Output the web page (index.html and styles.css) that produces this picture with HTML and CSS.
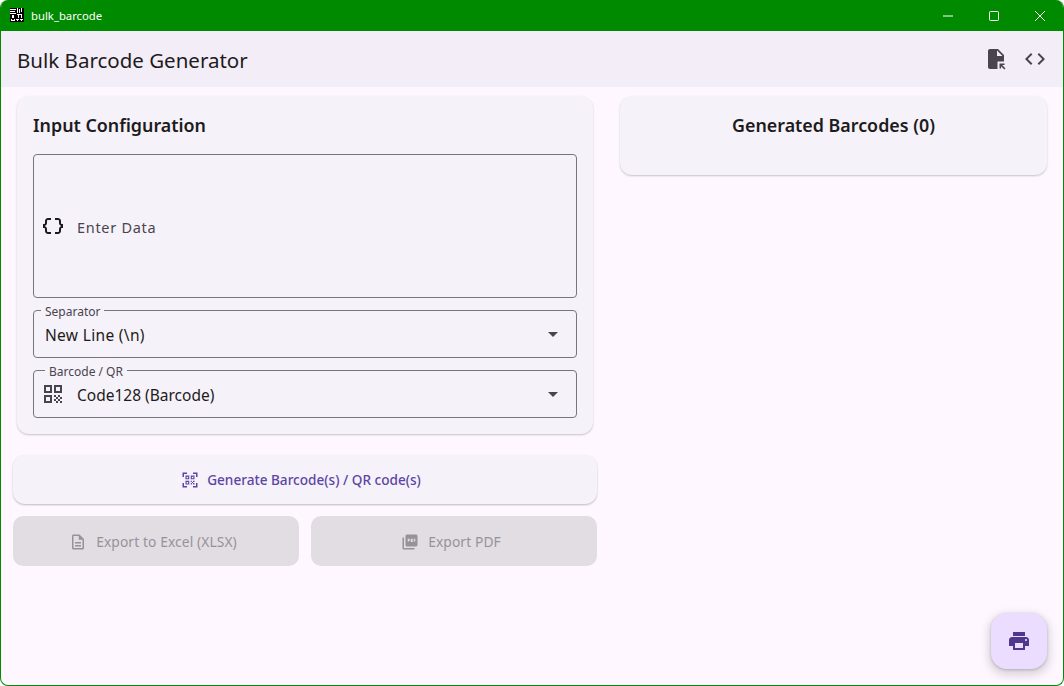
FILE: index.html
```html
<!DOCTYPE html>
<html lang="en">
<head>
<meta charset="utf-8">
<title>bulk_barcode</title>
<link rel="stylesheet" href="styles.css">
</head>
<body>
<div class="window">
  <header class="titlebar">
    <svg class="app-icon" width="14" height="14" viewBox="0 0 14 14"><rect width="14" height="14" fill="#000"/><path d="M0 1h6v1H0zM0 3h5v1H0zM7 0h1v5H7zM9 1h1v4H9zM11 0h1v4h-1zM0 5h6v1H0zM7 6h5v1H7zM8 7h1v3H8zM11 7h1v3h-1zM2 7h2v3H2zM1 11h1v2H1zM4 11h1v2H4zM6 11h3v1H6zM10 11h3v1h-3zM2 12h2v1H2zM7 12h1v1H7zM11 12h1v1h-1z" fill="#fff"/></svg>
    <span class="app-name">bulk_barcode</span>
    <div class="win-controls">
      <svg width="10" height="10" viewBox="0 0 10 10"><path d="M0 5h10" stroke="#fff" fill="none"/></svg>
      <svg width="10" height="10" viewBox="0 0 10 10"><rect x=".5" y=".5" width="9" height="9" rx="1" stroke="#fff" fill="none"/></svg>
      <svg width="10" height="10" viewBox="0 0 10 10"><path d="M0 0l10 10M10 0L0 10" stroke="#fff" fill="none"/></svg>
    </div>
  </header>
  <div class="appbar">
    <h1 class="app-title">Bulk Barcode Generator</h1>
    <div class="actions">
      <svg width="24" height="24" viewBox="0 0 24 24"><path d="M6 2h8l6 6v6.500h-6.500V22H6c-1.100 0-2-.9-2-2V4c0-1.100.9-2 2-2zm7 1.500V9h5.500z" fill="#49454f" fill-rule="evenodd"/><path d="M15.500 16.500h5v1.600h-2.300l3.300 3.300-1.100 1.100-3.300-3.300v2.300h-1.600z" fill="#49454f"/></svg>
      <svg width="24" height="24" viewBox="0 0 24 24"><path d="M9.400 16.600 4.800 12l4.600-4.600L8 6l-6 6 6 6 1.400-1.400zm5.200 0 4.600-4.600-4.600-4.600L16 6l6 6-6 6-1.400-1.400z" fill="#49454f"/></svg>
    </div>
  </div>
  <main class="content">
    <section class="left">
      <div class="card input-card">
        <h2 class="card-title">Input Configuration</h2>
        <div class="field data-field">
          <svg class="field-icon" width="24" height="24" viewBox="0 0 24 24"><path d="M4 7v2c0 .55-.45 1-1 1H2v4h1c.55 0 1 .45 1 1v2c0 1.650 1.350 3 3 3h3v-2H7c-.55 0-1-.45-1-1v-2c0-1.300-.84-2.420-2-2.830v-.34C5.160 11.420 6 10.300 6 9V7c0-.55.45-1 1-1h3V4H7C5.350 4 4 5.350 4 7zm17 3c-.55 0-1-.45-1-1V7c0-1.650-1.350-3-3-3h-3v2h3c.55 0 1 .45 1 1v2c0 1.300.84 2.420 2 2.830v.34c-1.160.41-2 1.520-2 2.830v2c0 .55-.45 1-1 1h-3v2h3c1.650 0 3-1.350 3-3v-2c0-.55.45-1 1-1h1v-4h-1z" fill="#1d1b20"/></svg>
          <span class="placeholder">Enter Data</span>
        </div>
        <div class="field select sep-field">
          <span class="legend sep-legend">Separator</span>
          <span class="value">New Line (\n)</span>
          <span class="caret"></span>
        </div>
        <div class="field select with-icon">
          <span class="legend bar-legend">Barcode / QR</span>
          <svg class="field-icon" width="24" height="24" viewBox="0 0 24 24"><path d="M3 11h8V3H3v8zm2-6h4v4H5V5zM3 21h8v-8H3v8zm2-6h4v4H5v-4zM13 3v8h8V3h-8zm6 6h-4V5h4v4zM19 19h2v2h-2zM13 13h2v2h-2zM15 15h2v2h-2zM13 17h2v2h-2zM15 19h2v2h-2zM17 17h2v2h-2zM17 13h2v2h-2zM19 15h2v2h-2z" fill="#49454f"/></svg>
          <span class="value">Code128 (Barcode)</span>
          <span class="caret"></span>
        </div>
      </div>
      <button class="btn generate" type="button">
        <svg width="18" height="18" viewBox="0 0 24 24"><path d="M2 2h6v2H4v4H2zM16 2h6v6h-2V4h-4zM2 16h2v4h4v2H2zM20 16h2v6h-6v-2h4zM6 6h5v5H6zm1.500 1.500v2h2v-2zM13 6h5v5h-5zm1.500 1.500v2h2v-2zM6 13h5v5H6zm1.500 1.500v2h2v-2zM13 13h1.500v1.500H13zM14.500 14.500H16V16h-1.500zM16 13h2v1.500h-2zM13 16h1.500v2H13zM16 16h2v2h-2z" fill="#5b46a5" fill-rule="evenodd"/></svg>
        <span>Generate Barcode(s) / QR code(s)</span>
      </button>
      <div class="export-row">
        <button class="btn disabled" type="button">
          <svg width="18" height="18" viewBox="0 0 24 24"><path d="M8 16h8v2H8zm0-4h8v2H8zm6-10H6c-1.100 0-2 .9-2 2v16c0 1.100.89 2 1.990 2H18c1.100 0 2-.9 2-2V8l-6-6zm4 18H6V4h7v5h5v11z" fill="#96929a"/></svg>
          <span>Export to Excel (XLSX)</span>
        </button>
        <button class="btn disabled" type="button">
          <svg width="18" height="18" viewBox="0 0 24 24"><path d="M20 2H8c-1.100 0-2 .9-2 2v12c0 1.100.9 2 2 2h12c1.100 0 2-.9 2-2V4c0-1.100-.9-2-2-2zM4 6H2v14c0 1.100.9 2 2 2h14v-2H4V6z" fill="#96929a"/><path d="M9 7.500h2.500v3H10v1.500H9zM13 7.500h2.500v4.500H13zM17 7.500h2.500v1H18v1h1.300v1H18V12h-1z" fill="#e2dde3"/></svg>
          <span>Export PDF</span>
        </button>
      </div>
    </section>
    <section class="right">
      <div class="card result-card">
        <h2 class="card-title">Generated Barcodes (0)</h2>
      </div>
    </section>
  </main>
  <button class="fab" type="button" aria-label="Print">
    <svg width="24" height="24" viewBox="0 0 24 24"><path d="M19 8H5c-1.660 0-3 1.340-3 3v6h4v4h12v-4h4v-6c0-1.660-1.340-3-3-3zm-3 11H8v-5h8v5zm3-7c-.55 0-1-.45-1-1s.45-1 1-1 1 .45 1 1-.45 1-1 1zm-1-9H6v4h12V3z" fill="#4f378b"/></svg>
  </button>
</div>
</body>
</html>
```
FILE: styles.css
```css
* { box-sizing: border-box; }
html, body { margin: 0; height: 100%; background: #fff; }
body { font-family: "Noto Sans", sans-serif; color: #1d1b20; overflow: hidden; }
.window {
  position: relative;
  width: 1064px;
  height: 686px;
  border: 1px solid #008a00;
  border-top: 0;
  border-radius: 8px;
  overflow: hidden;
  background: #fef7ff;
  display: flex;
  flex-direction: column;
}
.titlebar {
  height: 31px;
  flex: none;
  background: #008a00;
  display: flex;
  align-items: center;
  padding-left: 9px;
  color: #fff;
}
.app-icon { flex: none; margin-top: -1px; }
.app-name { margin-left: 7px; font-size: 11.300px; }
.win-controls { margin-left: auto; display: flex; }
.win-controls svg { display: block; margin: 0 18px; }
.appbar {
  height: 56px;
  flex: none;
  background: #f3edf7;
  display: flex;
  align-items: center;
  padding: 0 16px;
}
.app-title { margin: 0; font-size: 20.500px; font-weight: 400; color: #1d1b20; position: relative; top: 1px; }
.actions { margin-left: auto; display: flex; gap: 15px; }
.actions svg { display: block; }
.content {
  flex: 1;
  min-height: 0;
  display: grid;
  grid-template-columns: 608px 1fr;
  padding-top: 9px;
}
.left { padding: 0 0 0 12px; width: 596px; display: flex; flex-direction: column; }
.right { padding: 0 16px 0 11px; }
.card {
  background: #f6f2f9;
  border-radius: 12px;
  box-shadow: 0 1px 2px rgba(0,0,0,.22);
}
.input-card { margin: 0 4px; padding: 16px; height: 338px; display: flex; flex-direction: column; }
.card-title { margin: 0; font-size: 17.850px; line-height: 26px; font-weight: 600; color: #1d1b20; }
.result-card { height: 79px; padding-top: 16px; text-align: center; }
.field {
  position: relative;
  display: flex;
  align-items: center;
  border: 1px solid #79747e;
  border-radius: 4px;
  width: 544px;
}
.data-field { height: 144px; margin-top: 16px; padding-left: 7px; }
.select { height: 48px; margin-top: 12px; padding-left: 11px; }
.with-icon { padding-left: 7px; }
.field-icon { display: block; flex: none; }
.placeholder { margin-left: 12px; font-size: 14.500px; line-height: 22px; padding-top: 2px; color: #49454f; letter-spacing: .7px; }
.value { font-size: 15.500px; line-height: 22px; padding-top: 2px; color: #1d1b20; }
.sep-field .value { letter-spacing: .33px; }
.with-icon .value { margin-left: 12px; }
.legend {
  position: absolute;
  top: -6px;
  padding: 0 4px;
  font-size: 12px;
  line-height: 13px;
  color: #49454f;
  background: #f6f2f9;
}
.sep-legend { left: 7px; }
.bar-legend { left: 11px; }
.caret {
  position: absolute;
  right: 18px;
  top: 21px;
  width: 0;
  height: 0;
  border-left: 5px solid transparent;
  border-right: 5px solid transparent;
  border-top: 5px solid #49454f;
}
.btn {
  border: 0;
  font-family: inherit;
  font-size: 13.600px;
  font-weight: 500;
  display: flex;
  align-items: center;
  justify-content: center;
  gap: 8px;
  padding: 0;
}
.btn svg { flex: none; display: block; }
.generate {
  margin-top: 21px;
  width: 584px;
  height: 49px;
  padding-right: 8px;
  border-radius: 12px;
  background: #f6f2f9;
  color: #5b46a5;
  box-shadow: 0 1px 2px rgba(0,0,0,.25);
}
.export-row { margin-top: 12px; width: 584px; display: grid; grid-template-columns: 1fr 1fr; gap: 12px; }
.disabled { height: 50px; border-radius: 10px; background: #e2dde3; color: #96929a; font-size: 13.800px; font-weight: 400; letter-spacing: .1px; gap: 9px; padding: 1px 6px 0 0; }
.fab {
  position: absolute;
  right: 16px;
  bottom: 16px;
  width: 56px;
  height: 56px;
  border: 0;
  border-radius: 16px;
  background: #eaddff;
  display: flex;
  align-items: center;
  justify-content: center;
  box-shadow: 0 4px 8px 3px rgba(0,0,0,.13), 0 1px 3px rgba(0,0,0,.2);
  padding: 0;
}
.fab svg { display: block; }
```
